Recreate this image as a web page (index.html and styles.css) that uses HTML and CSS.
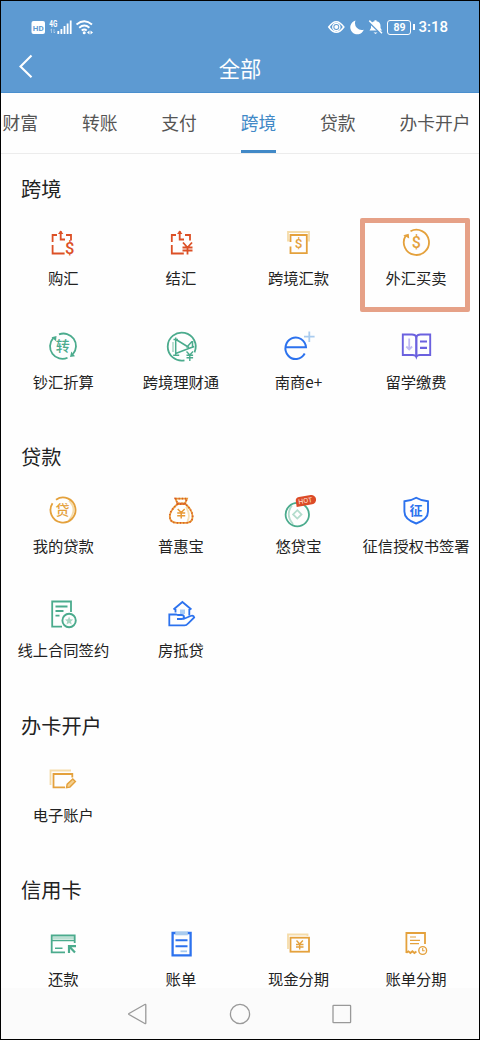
FILE: index.html
```html
<!DOCTYPE html>
<html lang="zh-CN">
<head>
<meta charset="utf-8">
<title>全部</title>
<link rel="stylesheet" href="styles.css">
</head>
<body>
<div class="phone">
  <header class="header">
    <div class="status">
      <svg class="status-left" width="66" height="18" viewBox="30 18 66 18">
        <rect x="31.5" y="21" width="13.5" height="13" rx="2" fill="#fff"/>
        <text x="38.2" y="30.9" class="hd">HD</text>
        <text x="53.3" y="26.8" class="net" textLength="8" lengthAdjust="spacingAndGlyphs">4G</text>
        <path d="M51.5 29v4M50.3 30.2l1.2-1.2M54 29v4M54 33l1.3-1.2" stroke="#fff" stroke-width=".8" opacity=".55" fill="none"/>
        <path d="M58.3 31v3M61.4 29v5M64.5 26v8M67.6 23.5v10.5M70.7 20.5v13.5" stroke="#fff" stroke-width="1.8"/>
        <path d="M76.5 24.5q8-6.5 15.5 0M79.2 27.7q5.2-4.2 10.2 0M81.7 30.5q2.6-2 5 0" stroke="#fff" stroke-width="1.9" fill="none"/>
        <circle cx="84.2" cy="32.8" r="1.5" fill="#fff"/>
        <path d="M90.5 30.5l2.5 2-2.5 2zM89.500 30.500l-2.500 2 2.500 2z" fill="#fff"/>
      </svg>
      <div class="status-right">
        <svg width="62" height="18" viewBox="327 18 62 18">
          <path d="M329.8 27q7.500-10.500 15 0q-7.500 10.500-15 0z" fill="none" stroke="#fff" stroke-width="1.6"/>
          <circle cx="337.3" cy="27" r="3.6" fill="none" stroke="#fff" stroke-width="1.3"/>
          <circle cx="337.3" cy="27" r="2" fill="#fff"/>
          <path d="M356.5 20.5a7 7 0 1 0 8.300 9.300a7 7 0 0 1-8.300-9.300z" fill="#fff"/>
          <path d="M370.5 30.5l1.500-2.500V26q0-4 3.500-4.700v-1h2v1q4 .7 4 4.700v2l1.500 2.500z" fill="#fff"/>
          <path d="M374.5 32.5h4l-2 1.500z" fill="#fff"/>
          <path d="M369.5 21.5l13 12.500" stroke="#5d9ad2" stroke-width="2"/>
          <path d="M370.3 20.6l12.700 12.700" stroke="#fff" stroke-width="1.5"/>
        </svg>
        <span class="battery">89</span>
        <span class="clock">3:18</span>
      </div>
    </div>
    <div class="titlebar">
      <svg class="back" width="16" height="26" viewBox="0 0 16 26"><path d="M13.500 2.500L2.500 13.500L13.500 24.300" fill="none" stroke="#fff" stroke-width="2.100"/></svg>
      <h1>全部</h1>
    </div>
  </header>
  <nav class="tabs">
    <a>财富</a><a>转账</a><a>支付</a><a class="active">跨境</a><a>贷款</a><a>办卡开户</a>
  </nav>
  <main class="content">
    <section>
      <h2>跨境</h2>
      <div class="grid">
        <div class="item"><svg class="icon red" viewBox="0 0 36 36"><path d="M7.600 17V10H12M21 10h5v5.500M7.600 20v8.500h12M15.700 6v8.500h4.300"/><path d="M13 9l2.700-3.500L18.400 9z" class="solid"/><text x="24.800" y="28.800" font-size="16.500">$</text></svg><span>购汇</span></div>
        <div class="item"><svg class="icon red" viewBox="0 0 36 36"><path d="M8.800 17V10H13M22 10h5v5.500M8.800 20v8.500h12M16.700 6v8.500h4.300"/><path d="M14 9l2.700-3.500L19.400 9z" class="solid"/><path d="M20 17.500l4.500 5 4.500-5M19.500 22.500h10M19.500 25.500h10M24.500 22.500v7"/></svg><span>结汇</span></div>
        <div class="item"><svg class="icon gold" viewBox="0 0 36 36"><path class="pale" d="M9.500 15.500H8V7H29V15.500H27.500"/><path d="M10.500 17V10H26.800V28.200H10.500V21.500"/><text x="18.600" y="23.400" font-size="13.500">$</text></svg><span>跨境汇款</span></div>
        <div class="item marked"><svg class="icon gold" viewBox="0 0 36 36"><path d="M12.500 6.200A12.600 12.600 0 1 1 7.500 11"/><path d="M5.200 10.200l5.500-1.400.5 4.700z" class="solid"/><text x="18.400" y="23" font-size="16">$</text></svg><span>外汇买卖</span></div>
        <div class="item"><svg class="icon green" viewBox="0 0 36 36"><path d="M14 5.400A12.400 12.400 0 0 1 28 25M22.500 28.800A12.400 12.400 0 0 1 8.200 9.200"/><path d="M6.500 8.300l5-1.300-.5 5.300zM25 28l5-.8-3.700-4.700z" class="solid"/><text x="17.700" y="22.100" font-size="14" class="han">转</text></svg><span>钞汇折算</span></div>
        <div class="item"><svg class="icon green" viewBox="0 0 36 36"><path d="M21.500 31.300a14 14 0 1 1 10-8"/><path class="pale" d="M10 13v10"/><path d="M12.700 8.500v18M10.200 26.300h6M10.500 10.500h4.500M13 10.500l13 8M12.700 24.500l13-5 5.500-2M29 12.500l-5.500 6M29.500 12v7" stroke-width="1.500"/><path d="M23.500 22.500l3.300 3.500 3.200-3.500M23.500 26.300h6.600M23.500 28.700h6.600M26.800 26v6" stroke-width="1.400"/></svg><span>跨境理财通</span></div>
        <div class="item"><svg class="icon blue" viewBox="0 0 36 36"><path d="M5.500 18.300H26A10.300 10.800 0 1 0 24.700 24.600" stroke-width="2"/><path class="pale" d="M29.300 2.500v10.500M24 7.700h10.600"/></svg><span>南商e+</span></div>
        <div class="item"><svg class="icon purple" viewBox="0 0 36 36"><path d="M4.800 5.500H14Q17.500 5.500 18.300 8Q19.200 5.500 22.500 5.500H32.200V26H22Q19 26 18.300 28Q17.500 26 14.500 26H4.800Z" stroke-width="1.900"/><path d="M18.300 8V27" stroke-width="2.300"/><path d="M22 12.500h7M22 18.800h7" stroke-width="2.200"/><path class="pale" d="M11.200 9.500v11M8.300 17.500l2.900 3 2.900-3"/></svg><span>留学缴费</span></div>
      </div>
    </section>
    <section>
      <h2>贷款</h2>
      <div class="grid">
        <div class="item"><svg class="icon gold" viewBox="0 0 36 36"><path class="pale" d="M24 7.500q9 9 0 19.500"/><path d="M11 6.700A12.500 12.500 0 1 1 7.500 10.300"/><text x="17.600" y="22.300" font-size="14" class="han">贷</text></svg><span>我的贷款</span></div>
        <div class="item"><svg class="icon bag" viewBox="0 0 36 36"><path class="pale" d="M23 14q5 8 1.500 14"/><path d="M12.500 5.700h11.500l-2 4.800h-7.500zM14.500 11Q6.500 18 6.800 23.500Q7 29.800 14 29.800H23Q29.600 29.800 29.600 23.500Q29.600 17.500 22.500 11Z"/><path class="dash" d="M12.500 5.700h11.500l-2 4.800h-7.500zM14.500 11Q6.500 18 6.800 23.500Q7 29.800 14 29.800H23Q29.600 29.800 29.600 23.500Q29.600 17.500 22.500 11Z"/><path d="M14.700 16l3.500 3.500 3.500-3.500M14.200 20h8M14.200 22.700h8M18.200 20v5.500" stroke-width="1.500"/></svg><span>普惠宝</span></div>
        <div class="item"><svg class="icon green" viewBox="0 0 36 36"><path class="pale" d="M12 12.500q-7 9 1 18.500M17.300 17.200L21.500 21.400L17.300 25.600L13.100 21.400Z"/><circle cx="17.300" cy="21.600" r="11.700"/><g transform="rotate(-9 25.300 7.500)"><path d="M15.800 12.500V6.800q0-3.800 3.800-3.800h11.900a4.500 4.500 0 0 1 0 9.300z" fill="#dc4b27" stroke="none"/><text x="25.300" y="10.100" class="hot">HOT</text></g></svg><span>悠贷宝</span></div>
        <div class="item"><svg class="icon blue" viewBox="0 0 36 36"><path d="M18.200 4.800Q23.500 8 30 8.300V18.500Q30 26.500 18.200 30.500Q6.400 26.500 6.400 18.500V8.300Q13 8 18.200 4.800Z" stroke-width="1.900"/><text x="18" y="22" font-size="13" class="han strong">征</text></svg><span>征信授权书签署</span></div>
        <div class="item"><svg class="icon green" viewBox="0 0 36 36"><path d="M17 29.700H7.200V4.500H26V15M10.500 9.500h12M10.500 14h8M10.500 18.700h4" stroke-width="1.800"/><circle cx="24.100" cy="23.500" r="6.700" stroke-width="1.900"/><path d="M24.100 19.500l1.200 2.700 2.900.3-2.200 2 .7 2.900-2.600-1.500-2.600 1.500.7-2.900-2.200-2 2.900-.3z" fill="#a5d5c2" stroke="none"/></svg><span>线上合同签约</span></div>
        <div class="item"><svg class="icon blue" viewBox="0 0 36 36"><rect x="17" y="12.500" width="5" height="4.500" fill="#a9cbf5" stroke="none"/><path d="M10.500 12.500L19.400 5L28.400 12.500M12.500 12V15.500M26.300 12V18.500"/><path d="M14 22H18.500Q21 22 21 20Q21 18 18.500 18H15L13 17.500H6.300V28.400H21.500Q23.500 28.400 25 26.500L31.200 20.500Q30.500 18 27.500 19L20.500 22"/></svg><span>房抵贷</span></div>
      </div>
    </section>
    <section>
      <h2>办卡开户</h2>
      <div class="grid">
        <div class="item"><svg class="icon gold" viewBox="0 0 36 36"><path class="pale" d="M5.500 23V8.500H26"/><path d="M20 25.300H8.500V12H27.300V15.500"/><path d="M21.500 25.700l.7-3.500 5.600-5.200 2.600 2.500-5.500 5.600z" fill="#f3cf8f" stroke-width="1.400"/></svg><span>电子账户</span></div>
      </div>
    </section>
    <section>
      <h2>信用卡</h2>
      <div class="grid">
        <div class="item"><svg class="icon green" viewBox="0 0 36 36"><path class="pale" d="M7.500 12h21.500"/><path d="M20 26.300H6.700V9.500H29.700V17"/><path d="M7 14.500h22M10 22.200h7.500" stroke-width="1.400"/><path d="M24 27V20.200H31M24.500 20.700L30 26.500" stroke-width="2.200"/></svg><span>还款</span></div>
        <div class="item"><svg class="icon blue" viewBox="0 0 36 36"><path d="M13 7H9.600V29.300H27.600V7H24" stroke-width="2.300"/><rect x="12.300" y="5.300" width="12.500" height="4" fill="#a9cbee" stroke="none"/><path d="M12.500 14.300h12M12.500 20.200h12" stroke-width="2"/><path class="pale" d="M17.500 25.300h6.500"/></svg><span>账单</span></div>
        <div class="item"><svg class="icon gold" viewBox="0 0 36 36"><path class="pale" d="M8 23V8.500H27.500V10"/><rect x="10.500" y="11.700" width="18.500" height="14"/><path d="M16.500 14.500l3.200 3.500 3.200-3.500M16 18.500h7.500M16 21h7.500M19.700 18.500v5" stroke-width="1.400"/></svg><span>现金分期</span></div>
        <div class="item"><svg class="icon gold" viewBox="0 0 36 36"><path d="M8.400 27V7H27V18M8.400 26.800l2-1.500 2 1.700 2-1.700 2 1.700 2-1.500"/><path d="M12 11h6M12 14.300h10M12 17.700h9" stroke-width="1.200"/><circle cx="24.700" cy="24.500" r="3.900" stroke-width="1.400"/><path d="M24.700 22v2.700h2" stroke-width="1.100"/></svg><span>账单分期</span></div>
      </div>
    </section>
  </main>
  <footer class="navbar">
    <svg viewBox="0 0 22 22"><path d="M18.800 2V20Q18.800 21 17.800 20.500L2 11.500Q1.200 11 2 10.500L17.800 1.500Q18.800 1 18.800 2Z"/></svg>
    <svg viewBox="0 0 22 22"><circle cx="11" cy="11" r="9.600"/></svg>
    <svg viewBox="0 0 22 22"><rect x="2" y="2.300" width="17.600" height="17.400" rx=".6"/></svg>
  </footer>
</div>
</body>
</html>
```
FILE: styles.css
```css
*, *::before, *::after { box-sizing: border-box; }
body {
  margin: 0;
  font-family: "Noto Sans CJK SC", sans-serif;
  color: #222;
}
.phone {
  width: 480px;
  height: 1040px;
  border: 1px solid #000;
  background: #fefefe;
  display: flex;
  flex-direction: column;
  overflow: hidden;
}
.header {
  flex: none;
  height: 92px;
  background: #5d9ad2;
  border-bottom: 1px solid #4a8fce;
  color: #fff;
}
.status {
  display: flex;
  justify-content: space-between;
  padding: 17px 31px 0 29px;
  height: 40px;
}
.status-right { display: flex; height: 18px; align-items: center; }
.hd { font: bold 8px Roboto, sans-serif; fill: #5d9ad2; text-anchor: middle; }
.net { font: bold 8.5px Roboto, sans-serif; fill: #fff; text-anchor: middle; }
.battery {
  position: relative;
  margin-left: -1px;
  width: 24px;
  height: 15px;
  border: 1.5px solid #fff;
  border-radius: 3px;
  font: bold 10.5px/13px Roboto, sans-serif;
  text-align: center;
}
.battery::after {
  content: "";
  position: absolute;
  right: -4.5px;
  top: 3px;
  width: 2px;
  height: 6px;
  background: #fff;
}
.clock { margin-left: 7px; font: 500 15px/18px Roboto, sans-serif; }
.titlebar {
  display: grid;
  grid-template-columns: 60px 1fr 60px;
  align-items: center;
  height: 51px;
}
.back { margin-left: 17px; margin-top: -2px; }
h1 {
  margin: 3px 0 0;
  font-size: 21.3px;
  line-height: 30px;
  font-weight: 400;
  text-align: center;
}
.tabs {
  flex: none;
  height: 61px;
  display: flex;
  gap: 43.8px;
  padding-left: 1.5px;
  border-bottom: 1px solid #ececec;
  white-space: nowrap;
}
.tabs a {
  height: 60px;
  font-size: 17.8px;
  line-height: 59px;
  color: #555;
}
.tabs .active { color: #4189c7; border-bottom: 3px solid #4189c7; }
.content { flex: 1; min-height: 0; overflow: hidden; }
h2 {
  margin: 0;
  height: 61px;
  padding: 20px 0 0 20px;
  font-size: 20.2px;
  line-height: 30px;
  font-weight: 400;
}
.grid {
  display: grid;
  grid-template-columns: repeat(4, 117.6px);
  grid-auto-rows: 103.7px;
  padding-left: 3.5px;
}
.item {
  position: relative;
  display: flex;
  flex-direction: column;
  align-items: center;
  gap: 6px;
  padding-top: 10px;
}
.item span { font-size: 15.3px; line-height: 20px; white-space: nowrap; }
.marked::before {
  content: "";
  position: absolute;
  left: 3px;
  top: 3px;
  width: 110px;
  height: 94px;
  border: 5px solid #e6a187;
  border-radius: 2px;
}
.icon {
  width: 36px;
  height: 36px;
  overflow: visible;
  fill: none;
  stroke: var(--ink);
  stroke-width: 1.8;
}
.icon text {
  fill: var(--ink);
  stroke: none;
  text-anchor: middle;
  font-family: Roboto, sans-serif;
  font-weight: 500;
}
.icon .solid { fill: var(--ink); stroke: none; }
.icon .pale { stroke: var(--pale); }
.icon .han { font-family: "Noto Sans CJK SC", sans-serif; }
.icon .strong { font-weight: 700; }
.icon .hot { fill: #ffe4da; font-size: 7px; font-weight: 400; }
.red { --ink: #dc5026; --pale: #f1b5a0; }
.gold { --ink: #e4a13c; --pale: #f5dca9; }
.green { --ink: #4bab8d; --pale: #b4dccd; }
.blue { --ink: #2c72ee; --pale: #a9cbee; }
.purple { --ink: #6b61df; --pale: #bfb9f2; }
.bag { --ink: #e89a35; --pale: #f6dfb0; }
.bag .dash { stroke: #d75327; stroke-dasharray: 1 2.2; }
.navbar {
  flex: none;
  height: 51px;
  background: #fbfbfb;
  display: flex;
  justify-content: center;
  align-items: center;
  gap: 80px;
}
.navbar svg { width: 22px; height: 22px; fill: none; stroke: #999; stroke-width: 1.3; }
```
